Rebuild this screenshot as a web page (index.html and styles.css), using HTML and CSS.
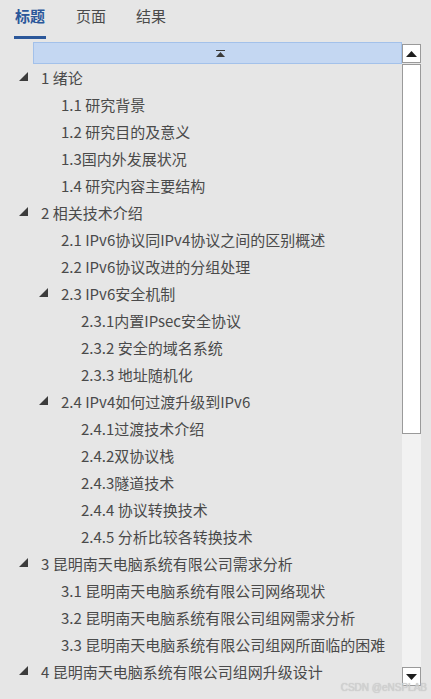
FILE: index.html
```html
<!DOCTYPE html>
<html lang="zh-CN">
<head>
<meta charset="utf-8">
<title>导航</title>
<link rel="stylesheet" href="styles.css">
</head>
<body>
<div class="nav">
  <div class="tabs">
    <div class="tab active">标题</div>
    <div class="tab">页面</div>
    <div class="tab">结果</div>
  </div>
  <div class="pane">
    <div class="tree">
      <div class="collapse-bar">
        <svg class="collapse-icon" width="9" height="7" viewBox="0 0 9 7"><rect x="0" y="0" width="9" height="1" fill="#3a3a3a"/><polygon points="4.5,2 9,7 0,7" fill="#3a3a3a"/></svg>
      </div>
      <ul class="rows">
        <li class="row d1"><span class="twisty"><svg width="9" height="9" viewBox="0 0 9 9"><polygon points="9,0 9,9 0,9" fill="#3c3c3c"/></svg></span><span class="label">1 绪论</span></li>
        <li class="row d2"><span class="twisty"></span><span class="label">1.1 研究背景</span></li>
        <li class="row d2"><span class="twisty"></span><span class="label">1.2 研究目的及意义</span></li>
        <li class="row d2"><span class="twisty"></span><span class="label">1.3国内外发展状况</span></li>
        <li class="row d2"><span class="twisty"></span><span class="label">1.4 研究内容主要结构</span></li>
        <li class="row d1"><span class="twisty"><svg width="9" height="9" viewBox="0 0 9 9"><polygon points="9,0 9,9 0,9" fill="#3c3c3c"/></svg></span><span class="label">2 相关技术介绍</span></li>
        <li class="row d2"><span class="twisty"></span><span class="label">2.1 IPv6协议同IPv4协议之间的区别概述</span></li>
        <li class="row d2"><span class="twisty"></span><span class="label">2.2 IPv6协议改进的分组处理</span></li>
        <li class="row d2"><span class="twisty"><svg width="9" height="9" viewBox="0 0 9 9"><polygon points="9,0 9,9 0,9" fill="#3c3c3c"/></svg></span><span class="label">2.3 IPv6安全机制</span></li>
        <li class="row d3"><span class="twisty"></span><span class="label">2.3.1内置IPsec安全协议</span></li>
        <li class="row d3"><span class="twisty"></span><span class="label">2.3.2 安全的域名系统</span></li>
        <li class="row d3"><span class="twisty"></span><span class="label">2.3.3 地址随机化</span></li>
        <li class="row d2"><span class="twisty"><svg width="9" height="9" viewBox="0 0 9 9"><polygon points="9,0 9,9 0,9" fill="#3c3c3c"/></svg></span><span class="label">2.4 IPv4如何过渡升级到IPv6</span></li>
        <li class="row d3"><span class="twisty"></span><span class="label">2.4.1过渡技术介绍</span></li>
        <li class="row d3"><span class="twisty"></span><span class="label">2.4.2双协议栈</span></li>
        <li class="row d3"><span class="twisty"></span><span class="label">2.4.3隧道技术</span></li>
        <li class="row d3"><span class="twisty"></span><span class="label">2.4.4 协议转换技术</span></li>
        <li class="row d3"><span class="twisty"></span><span class="label">2.4.5 分析比较各转换技术</span></li>
        <li class="row d1"><span class="twisty"><svg width="9" height="9" viewBox="0 0 9 9"><polygon points="9,0 9,9 0,9" fill="#3c3c3c"/></svg></span><span class="label">3 昆明南天电脑系统有限公司需求分析</span></li>
        <li class="row d2"><span class="twisty"></span><span class="label">3.1 昆明南天电脑系统有限公司网络现状</span></li>
        <li class="row d2"><span class="twisty"></span><span class="label">3.2 昆明南天电脑系统有限公司组网需求分析</span></li>
        <li class="row d2"><span class="twisty"></span><span class="label">3.3 昆明南天电脑系统有限公司组网所面临的困难</span></li>
        <li class="row d1"><span class="twisty"><svg width="9" height="9" viewBox="0 0 9 9"><polygon points="9,0 9,9 0,9" fill="#3c3c3c"/></svg></span><span class="label">4 昆明南天电脑系统有限公司组网升级设计</span></li>
      </ul>
    </div>
    <div class="scrollbar">
      <div class="sb-btn"><svg width="11" height="6" viewBox="0 0 11 6"><polygon points="5.5,0 11,6 0,6" fill="#1e1e1e"/></svg></div>
      <div class="sb-thumb"></div>
      <div class="sb-track"></div>
      <div class="sb-btn"><svg width="11" height="6" viewBox="0 0 11 6"><polygon points="0,0 11,0 5.5,6" fill="#1e1e1e"/></svg></div>
    </div>
  </div>
  <div class="watermark">CSDN @eNSPLAB</div>
</div>
</body>
</html>
```

FILE: styles.css
```css
* {
  box-sizing: border-box;
}

html, body {
  margin: 0;
  padding: 0;
  height: 100%;
}

body {
  background: #e6e6e6;
  font-family: "Noto Sans CJK SC", "Noto Sans", sans-serif;
  color: #4a4a4a;
  overflow: hidden;
}

.nav {
  position: relative;
  height: 699px;
}

/* tab strip */
.tabs {
  display: flex;
  gap: 30px;
  padding: 3px 0 0 15px;
  height: 42px;
}

.tab {
  font-size: 15px;
  line-height: 26px;
  height: 36px;
  color: #4a4a4a;
  padding: 0;
}

.tab.active {
  color: #2b579a;
  font-weight: 700;
  border-bottom: 3px solid #2b579a;
  margin-left: -1px;
  padding: 0 1px;
}

/* tree + scrollbar */
.pane {
  display: flex;
  padding-right: 10px;
}

.tree {
  flex: 1;
  min-width: 0;
}

.collapse-bar {
  margin-left: 33px;
  height: 22px;
  background: #c4d7f2;
  border: 1px solid #a3c1ea;
  display: flex;
  align-items: center;
  justify-content: center;
}

.collapse-icon {
  display: block;
  margin-left: 6px;
}

.rows {
  list-style: none;
  margin: 0;
  padding: 0;
}

.row {
  display: flex;
  align-items: center;
  height: 27px;
  font-size: 15px;
  white-space: nowrap;
}

.row.d1 { padding-left: 19px; }
.row.d2 { padding-left: 39px; }
.row.d3 { padding-left: 59px; }

.twisty {
  width: 9px;
  height: 9px;
  margin-right: 13px;
  flex: none;
  position: relative;
  top: -1px;
}

.twisty svg {
  display: block;
}

.label {
  line-height: 27px;
}

.scrollbar {
  width: 19px;
  margin-top: 2px;
  height: 642px;
  display: flex;
  flex-direction: column;
}

.sb-btn {
  height: 19px;
  background: #fff;
  border: 1px solid #9a9a9a;
  display: flex;
  align-items: center;
  justify-content: center;
  flex: none;
}

.sb-thumb {
  margin-top: 1px;
  height: 370px;
  background: #fff;
  border: 1px solid #9a9a9a;
  flex: none;
}

.sb-track {
  flex: 1;
  background: #f2f2f2;
}

.watermark {
  position: absolute;
  right: 4px;
  bottom: 6px;
  font-family: "Liberation Sans", sans-serif;
  font-size: 10px;
  color: #d2d2d2;
  text-shadow: 0 0 1px #b8b8b8;
}
```
